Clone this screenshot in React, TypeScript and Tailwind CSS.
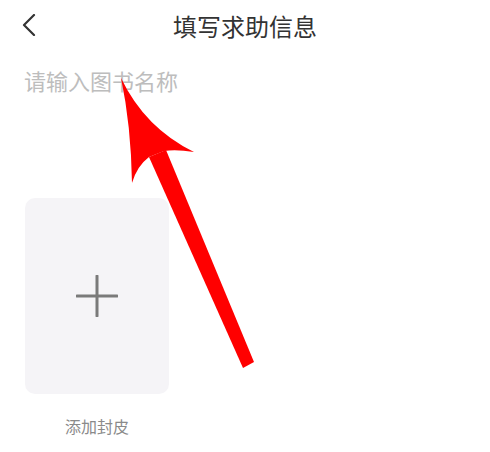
export default function App() {
  return (
    <div
      className="relative h-[452px] w-[490px] overflow-hidden bg-white"
      style={{ fontFamily: '"Noto Sans CJK SC", "Noto Sans", sans-serif' }}
    >
      {/* Header */}
      <div className="relative flex h-[52px] items-center justify-center">
        <button className="absolute left-[22px] top-[13px] flex h-[24px] w-[16px] items-center">
          <svg width="14" height="22" viewBox="0 0 14 22" fill="none">
            <path d="M12 1L2 11l10 10" stroke="#333" strokeWidth="2.2" strokeLinecap="round" strokeLinejoin="round" />
          </svg>
        </button>
        <h1 className="text-[24px] leading-none text-[#333]">填写求助信息</h1>
      </div>

      {/* Title input */}
      <div className="px-[24px] pt-[12px]">
        <input
          className="w-full bg-transparent text-[22px] leading-[32px] text-[#333] outline-none placeholder:text-[#bdbdbd]"
          placeholder="请输入图书名称"
        />
      </div>

      {/* Cover picker */}
      <div className="ml-[25px] mt-[102px] flex w-[144px] flex-col items-center">
        <div className="flex h-[196px] w-[144px] items-center justify-center rounded-[10px] bg-[#f5f4f7]">
          <svg width="42" height="42" viewBox="0 0 42 42">
            <path d="M21 1v40M1 21h40" stroke="#7a7a7a" strokeWidth="3" strokeLinecap="round" />
          </svg>
        </div>
        <p className="mt-[24px] text-[16px] leading-none text-[#8a8a8a]">添加封皮</p>
      </div>

      {/* Red annotation arrow */}
      <svg className="pointer-events-none absolute left-0 top-0" width="490" height="452" viewBox="0 0 490 452">
        <path d="M243 368L254 362L166 150L149 157Z" fill="#ff0000" />
        <path
          d="M121 78Q145 128 194 152Q176 149 164 151L149 157Q137 166 132 183Q131 125 121 78Z"
          fill="#ff0000"
        />
      </svg>
    </div>
  );
}
